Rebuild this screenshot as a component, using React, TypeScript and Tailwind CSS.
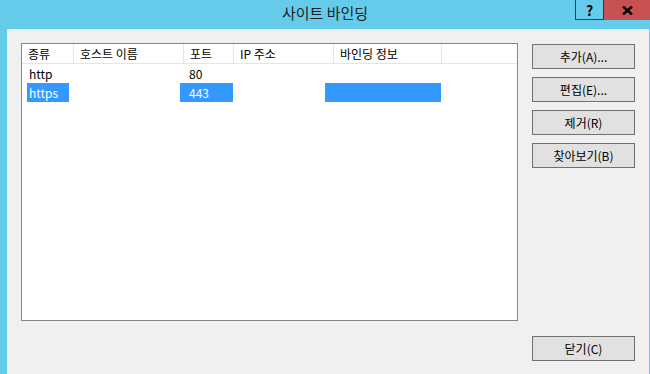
import React from 'react';

const font = { fontFamily: '"Noto Sans CJK KR", "Noto Sans", sans-serif' };

const columns = [
  { name: '종류', w: 'w-[52px]' },
  { name: '호스트 이름', w: 'w-[110px]' },
  { name: '포트', w: 'w-[50px]' },
  { name: 'IP 주소', w: 'w-[100px]' },
  { name: '바인딩 정보', w: 'w-[108px]' },
];

const actions = ['추가(A)...', '편집(E)...', '제거(R)', '찾아보기(B)'];

const DialogButton: React.FC<{ label: string }> = ({ label }) => (
  <button className="w-[103px] h-[25px] bg-[#e1e1e1] border border-[#707070] text-[12px] text-black leading-none flex items-center justify-center">
    {label}
  </button>
);

export default function App() {
  return (
    <div className="w-[650px] h-[374px] bg-[#65cbea] flex flex-col overflow-hidden" style={font}>
      {/* Title bar */}
      <div className="h-[29px] shrink-0 grid grid-cols-[1fr_auto_1fr]">
        <div />
        <div className="pt-[3px] text-[15px] text-[#1e1e1e] leading-[20px]">사이트 바인딩</div>
        <div className="flex justify-end items-start">
          <div className="w-[29px] h-[20px] border-l border-b border-r border-[#2b3a44] flex items-center justify-center text-[14px] font-bold text-black leading-none">
            ?
          </div>
          <div className="w-[46px] h-[20px] bg-[#c75050] flex items-center justify-center">
            <svg width="11" height="9" viewBox="0 0 11 9">
              <path d="M1 0.5 L10 8.5 M10 0.5 L1 8.5" stroke="#000" strokeWidth="2.4" />
            </svg>
          </div>
        </div>
      </div>

      {/* Client area */}
      <div className="flex-1 ml-[7px] mr-[1px] bg-[#f0f0f0] flex pl-[14px] pt-[14px] pb-[13px]">
        <div className="w-[497px] h-[278px] bg-white border border-[#828790] text-[12px] text-black">
          <div className="flex h-[20px] border-b border-[#e5e5e5]">
            {columns.map((c) => (
              <div
                key={c.name}
                className={`${c.w} h-full border-r border-[#e5e5e5] pl-[6px] flex items-center leading-none`}
              >
                {c.name}
              </div>
            ))}
          </div>
          <div className="flex h-[19px] items-center leading-none">
            <span className="pl-[7px] w-[167px]">http</span>
            <span>80</span>
          </div>
          <div className="flex h-[19px] leading-none text-white">
            <div className="ml-[5px] w-[42px] bg-[#3399ff] pl-[2px] flex items-center">https</div>
            <div className="w-[111px]" />
            <div className="w-[53px] bg-[#3399ff] pl-[9px] flex items-center">443</div>
            <div className="w-[92px]" />
            <div className="w-[116px] bg-[#3399ff]" />
          </div>
        </div>

        <div className="ml-[14px] pt-[1px] flex flex-col">
          <div className="flex flex-col gap-[8px]">
            {actions.map((a) => (
              <DialogButton key={a} label={a} />
            ))}
          </div>
          <div className="mt-auto">
            <DialogButton label="닫기(C)" />
          </div>
        </div>
      </div>
    </div>
  );
}
